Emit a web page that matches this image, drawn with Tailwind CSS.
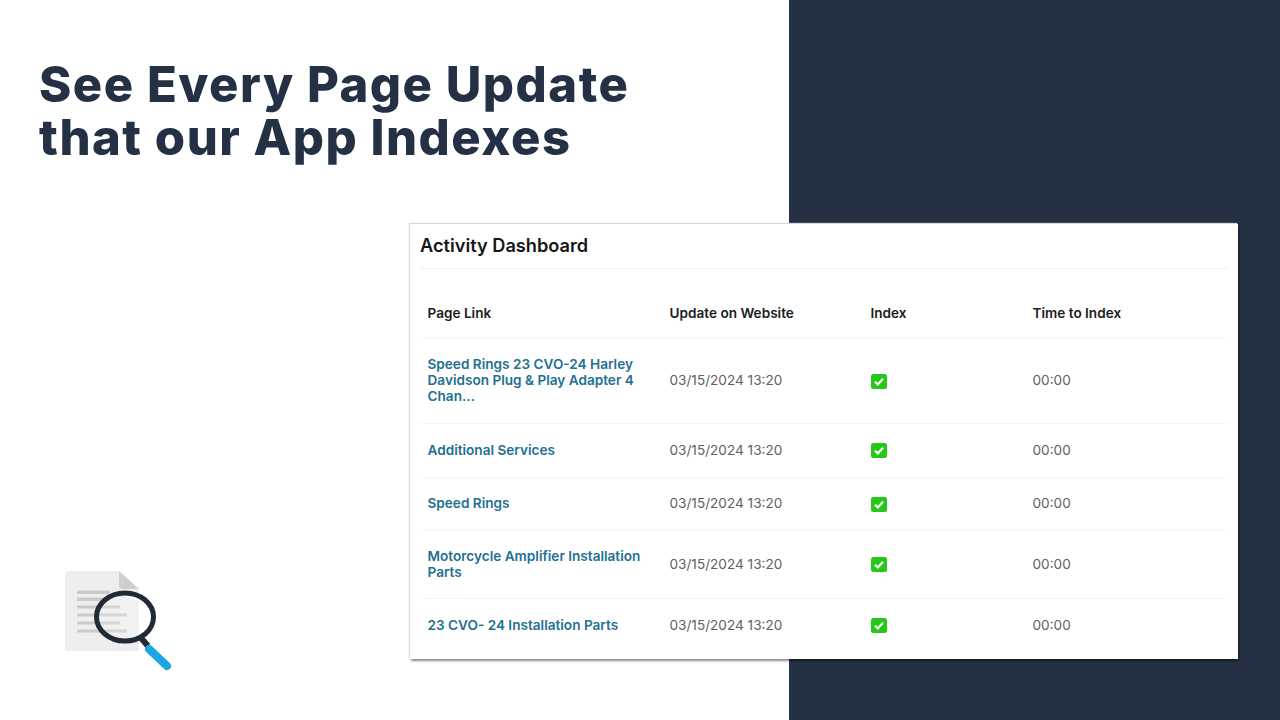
<!DOCTYPE html>
<html>
<head>
<meta charset="utf-8">
<script src="https://cdn.jsdelivr.net/npm/@tailwindcss/browser@4"></script>
</head>
<body class="m-0">
<div class="relative flex w-[1280px] h-[720px] overflow-hidden bg-white font-['Inter',sans-serif]">
  <div class="w-[788.5px] h-full bg-white pl-[39px] pt-[58px]">
    <h1 class="m-0 text-[49px] leading-[53px] font-extrabold text-[#243044] whitespace-nowrap tracking-[1.5px]">See Every Page Update<br>that our App Indexes</h1>
  </div>
  <div class="flex-1 h-full bg-[#243044]"></div>

  <svg class="absolute left-[60px] top-[566px]" width="116" height="110" viewBox="0 0 116 110">
    <defs><filter id="b" x="-5%" y="-5%" width="110%" height="110%"><feGaussianBlur stdDeviation="0.6"/></filter></defs>
    <g filter="url(#b)">
      <path d="M7 5H59L79 23V85H7a2 2 0 0 1-2-2V7a2 2 0 0 1 2-2Z" fill="#eeeeee"/>
      <path d="M59 5L79 23H63a4 4 0 0 1-4-4Z" fill="#cfcfcf"/>
      <g fill="#cbcbcb">
        <rect x="17" y="24.500" width="33" height="3.500"/>
        <rect x="17" y="31.500" width="33" height="3.500"/>
        <rect x="17" y="39.500" width="43" height="3"/>
        <rect x="17" y="47.500" width="50" height="3"/>
        <rect x="17" y="55.500" width="43" height="3"/>
        <rect x="17" y="63.500" width="50" height="3"/>
      </g>
      <ellipse cx="65" cy="51" rx="28.500" ry="24" fill="#fff" fill-opacity="0.2"/>
      <path d="M66 31Q78 31 85 40" fill="none" stroke="#fff" stroke-width="1"/>
      <ellipse cx="65" cy="51" rx="28.500" ry="24" fill="none" stroke="#232a36" stroke-width="5"/>
      <path d="M81 72L88 80" stroke="#232a36" stroke-width="6"/>
      <path d="M89 83L107 100" stroke="#1ba6e6" stroke-width="8" stroke-linecap="round"/>
    </g>
  </svg>

  <section class="absolute left-[410px] top-[224px] w-[828px] h-[435px] bg-white px-[10px] shadow-[-1px_-1px_1px_#d8d8d8,1px_2px_2px_rgba(0,0,0,0.45)]">
    <h2 class="m-0 h-[45px] border-b border-[#f3f3f3] text-[18.200px] leading-[42px] font-semibold text-[#161616]">Activity Dashboard</h2>
    <div class="grid grid-cols-[242px_201px_162px_1fr] pl-[7.500px] text-[13.600px] leading-[15.700px] text-[#5f5f5f] items-center">
      <div class="contents font-semibold text-[#1c1c1c]">
        <div class="h-[69px] pt-[37px]">Page Link</div>
        <div class="h-[69px] pt-[37px]">Update on Website</div>
        <div class="h-[69px] pt-[37px]">Index</div>
        <div class="h-[69px] pt-[37px]">Time to Index</div>
      </div>

      <div class="col-span-4 -ml-[7.500px] border-t border-[#f6f6f6]"></div>
      <div class="h-[84px] flex items-center font-semibold text-[#1f7091] pr-[20px]">Speed Rings 23 CVO-24 Harley Davidson Plug &amp; Play Adapter 4 Chan...</div>
      <div>03/15/2024 13:20</div>
      <div><svg width="16" height="15" viewBox="0 0 16 15" class="block"><rect width="16" height="15" rx="2.5" fill="#25c718"/><path d="M4 7.7L6.800 10.400L12 4.800" fill="none" stroke="#fff" stroke-width="2.200"/></svg></div>
      <div>00:00</div>

      <div class="col-span-4 -ml-[7.500px] border-t border-[#f6f6f6]"></div>
      <div class="h-[53px] flex items-center font-semibold text-[#1f7091] pr-[20px]">Additional Services</div>
      <div>03/15/2024 13:20</div>
      <div><svg width="16" height="15" viewBox="0 0 16 15" class="block"><rect width="16" height="15" rx="2.5" fill="#25c718"/><path d="M4 7.7L6.800 10.400L12 4.800" fill="none" stroke="#fff" stroke-width="2.200"/></svg></div>
      <div>00:00</div>

      <div class="col-span-4 -ml-[7.500px] border-t border-[#f6f6f6]"></div>
      <div class="h-[52px] flex items-center font-semibold text-[#1f7091] pr-[20px]">Speed Rings</div>
      <div>03/15/2024 13:20</div>
      <div><svg width="16" height="15" viewBox="0 0 16 15" class="block"><rect width="16" height="15" rx="2.5" fill="#25c718"/><path d="M4 7.7L6.800 10.400L12 4.800" fill="none" stroke="#fff" stroke-width="2.200"/></svg></div>
      <div>00:00</div>

      <div class="col-span-4 -ml-[7.500px] border-t border-[#f6f6f6]"></div>
      <div class="h-[67px] flex items-center font-semibold text-[#1f7091] pr-[20px]">Motorcycle Amplifier Installation Parts</div>
      <div>03/15/2024 13:20</div>
      <div><svg width="16" height="15" viewBox="0 0 16 15" class="block"><rect width="16" height="15" rx="2.5" fill="#25c718"/><path d="M4 7.7L6.800 10.400L12 4.800" fill="none" stroke="#fff" stroke-width="2.200"/></svg></div>
      <div>00:00</div>

      <div class="col-span-4 -ml-[7.500px] border-t border-[#f6f6f6]"></div>
      <div class="h-[53px] flex items-center font-semibold text-[#1f7091] pr-[20px]">23 CVO- 24 Installation Parts</div>
      <div>03/15/2024 13:20</div>
      <div><svg width="16" height="15" viewBox="0 0 16 15" class="block"><rect width="16" height="15" rx="2.5" fill="#25c718"/><path d="M4 7.7L6.800 10.400L12 4.800" fill="none" stroke="#fff" stroke-width="2.200"/></svg></div>
      <div>00:00</div>
    </div>
  </section>
</div>
</body>
</html>
